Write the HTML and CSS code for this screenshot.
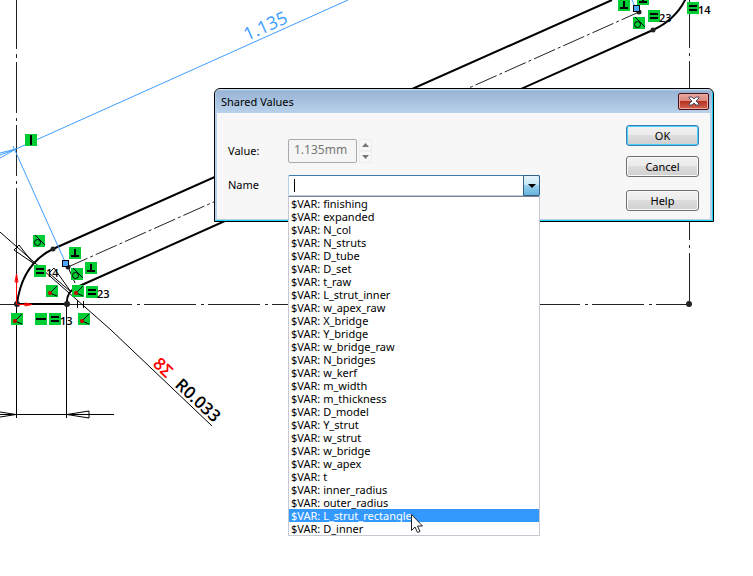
FILE: index.html
```html
<!DOCTYPE html>
<html lang="en">
<head>
<meta charset="utf-8">
<title>Shared Values</title>
<link rel="stylesheet" href="styles.css">
</head>
<body>
<main class="workspace">
<svg class="sketch" width="753" height="576" viewBox="0 0 753 576" aria-hidden="true">
  <defs>
    <g id="tile"><rect width="12" height="12" fill="#00cc33"/></g>
    <g id="equal"><use href="#tile"/><path d="M2 4H10M2 8H10" stroke="#000" stroke-width="2"/></g>
    <g id="perp"><use href="#tile"/><path d="M2 9H10M6 2V9" stroke="#000" stroke-width="2"/></g>
    <g id="vert"><use href="#tile"/><path d="M6 1V11" stroke="#000" stroke-width="2"/></g>
    <g id="horiz"><use href="#tile"/><path d="M1 6H11" stroke="#000" stroke-width="2"/></g>
    <g id="tangent"><use href="#tile"/><circle cx="4.500" cy="7.500" r="3" fill="none" stroke="#000"/><path d="M2 0L12 10" stroke="#000"/></g>
    <g id="coincident"><use href="#tile"/><path d="M11 1L4 8L11 11" fill="none" stroke="#000"/><circle cx="4" cy="8" r="2" fill="#c00"/></g>
  </defs>

  <g class="centerline">
    <path d="M16.5 0V49M16.5 54V58M16.5 62V113M16.5 118V121M16.5 125V176M16.5 181V184M16.5 188V304"/>
    <path d="M0 304.500H132M137 304.500H140M144 304.500H196M201 304.500H204M208 304.500H260M265 304.500H268M272 304.500H324M536 304.500H580M585 304.500H588M592 304.500H644M649 304.500H652M656 304.500H689"/>
    <path d="M689.500 0V48M689.500 53V56M689.500 61V112M689.500 200V240M689.500 245V248M689.500 253V304"/>
    <path d="M639 12L68 267" stroke-dasharray="23 3 3 3" stroke-dashoffset="4"/>
  </g>
  <g class="outline">
    <path d="M612 0L53 249Q22 264 17 304H67Q66 293 75 288L653 30Q677 19 687 -4"/>
  </g>
  <g class="dimension">
    <path d="M16.500 304V418M66.500 304V418M0 414.500H114M0 232L111 330L212 426"/>
    <path d="M0 412L16 414.500L0 417M67 414.500L89 411V418ZM33 263L14 250L19 245ZM71 292L49 273L54 268Z"/>
    <path d="M77.500 301V308M83.500 301V308M68 267L75 283"/>
  </g>
  <g class="driving">
    <path d="M0 153L16 149L348 0M0 158L16 149M0 155L16 149M13 146L66 264M632 0L636 9"/>
  </g>
  <g fill="#222">
    <circle cx="53" cy="249" r="2.500"/><circle cx="68" cy="267" r="2.500"/><circle cx="67" cy="304" r="3"/><circle cx="17" cy="304" r="3"/><circle cx="639" cy="12" r="2.500"/><circle cx="653" cy="30" r="2.500"/><circle cx="689" cy="304" r="3"/>
  </g>
  <g class="origin"><path d="M16.500 304V277M17 304.500H30"/><path d="M15 282L16.500 274L18 282ZM25 303L32 304.500L25 306Z"/></g>
  <g class="point"><rect x="62.500" y="260.500" width="6" height="6"/><rect x="633.500" y="5.500" width="6" height="6"/></g>

  <use href="#vert" x="25" y="134"/>
  <use href="#tangent" x="33" y="235"/>
  <use href="#perp" x="69" y="247"/>
  <use href="#perp" x="85" y="262"/>
  <use href="#tangent" x="71" y="268"/>
  <use href="#equal" x="34" y="265"/>
  <use href="#coincident" x="46" y="285"/>
  <use href="#coincident" x="72" y="285"/>
  <use href="#equal" x="86" y="286"/>
  <use href="#coincident" x="11" y="313"/>
  <use href="#horiz" x="35" y="313"/>
  <use href="#equal" x="49" y="313"/>
  <use href="#coincident" x="78" y="313"/>
  <use href="#perp" x="618" y="-1"/>
  <use href="#perp" x="637" y="-7"/>
  <use href="#tangent" x="633" y="17"/>
  <use href="#equal" x="648" y="10"/>
  <use href="#equal" x="687" y="2"/>
  <g class="tag">
    <text x="46" y="277">14</text><text x="97" y="298">23</text><text x="60" y="325">13</text><text x="659" y="22">23</text><text x="698" y="14">14</text>
  </g>
  <text class="length" transform="translate(247 41) rotate(-24)">1.135</text>
  <text class="radius" transform="translate(174 386) rotate(43)">R0.033</text>
  <text class="sigma" transform="translate(152 365) rotate(43)">8Σ</text>
</svg>

<section class="dialog" role="dialog" aria-labelledby="dialog-title">
  <header class="titlebar">
    <h1 id="dialog-title">Shared Values</h1>
    <button class="close" type="button" aria-label="Close"><svg width="12" height="10" viewBox="0 0 12 10"><path d="M1 1H4L6 3L8 1H11V2L8 5L11 8V9H8L6 7L4 9H1V8L4 5L1 2Z" fill="#fff" stroke="#4b4b60"/></svg></button>
  </header>
  <form class="content">
    <div class="fields">
      <div class="row">
        <label for="value">Value:</label>
        <input id="value" class="value" value="1.135mm" disabled>
        <div class="spinner">
          <button type="button" disabled aria-label="Increase"><svg width="7" height="4"><path d="M0 4L3.500 0L7 4Z"/></svg></button>
          <button type="button" disabled aria-label="Decrease"><svg width="7" height="4"><path d="M0 0L3.500 4L7 0Z"/></svg></button>
        </div>
      </div>
      <div class="row">
        <label for="name">Name</label>
        <div class="combo">
          <input id="name" class="name" role="combobox" aria-expanded="true" aria-controls="names">
          <span class="caret"></span>
          <button class="drop" type="button" aria-label="Show names"><svg width="8" height="4"><path d="M0 0H8L4 4Z"/></svg></button>
          <ul class="list" id="names" role="listbox">
            <li role="option">$VAR: finishing</li>
            <li role="option">$VAR: expanded</li>
            <li role="option">$VAR: N_col</li>
            <li role="option">$VAR: N_struts</li>
            <li role="option">$VAR: D_tube</li>
            <li role="option">$VAR: D_set</li>
            <li role="option">$VAR: t_raw</li>
            <li role="option">$VAR: L_strut_inner</li>
            <li role="option">$VAR: w_apex_raw</li>
            <li role="option">$VAR: X_bridge</li>
            <li role="option">$VAR: Y_bridge</li>
            <li role="option">$VAR: w_bridge_raw</li>
            <li role="option">$VAR: N_bridges</li>
            <li role="option">$VAR: w_kerf</li>
            <li role="option">$VAR: m_width</li>
            <li role="option">$VAR: m_thickness</li>
            <li role="option">$VAR: D_model</li>
            <li role="option">$VAR: Y_strut</li>
            <li role="option">$VAR: w_strut</li>
            <li role="option">$VAR: w_bridge</li>
            <li role="option">$VAR: w_apex</li>
            <li role="option">$VAR: t</li>
            <li role="option">$VAR: inner_radius</li>
            <li role="option">$VAR: outer_radius</li>
            <li role="option" class="selected" aria-selected="true">$VAR: L_strut_rectangle</li>
            <li role="option">$VAR: D_inner</li>
          </ul>
        </div>
      </div>
    </div>
    <div class="actions">
      <button class="button default" type="button">OK</button>
      <button class="button" type="button">Cancel</button>
      <button class="button help" type="button">Help</button>
    </div>
  </form>
</section>
<svg class="pointer" width="13" height="20" viewBox="0 0 13 20" aria-hidden="true"><path d="M.5 .5V16.500L4 13L6.500 18.500L9 17.500L6.500 12H11.500Z" fill="#fff" stroke="#222"/></svg>
</main>
</body>
</html>
```
FILE: styles.css
```css
* { box-sizing: border-box; }

body {
  margin: 0;
  background: #fff;
  font-family: "Noto Sans", "Open Sans", sans-serif;
  font-size: 11px;
  color: #000;
}

.workspace {
  position: relative;
  min-height: 100vh;
  overflow: hidden;
}

.sketch {
  position: absolute;
  left: 0;
  top: 0;
}

.sketch path { fill: none; }
.centerline { stroke: #222; }
.outline { stroke: #000; stroke-width: 2; }
.dimension { stroke: #000; }
.driving { stroke: #3d9dff; }
.origin { stroke: #f00; }
.point { fill: #4da6ff; stroke: #000; }

.tag {
  font: 600 11px "Open Sans", sans-serif;
}

.length,
.radius,
.sigma {
  font: 18px "Open Sans", sans-serif;
}

.length { fill: #3d9dff; }

.radius,
.sigma {
  font-size: 17px;
  font-weight: 600;
}

.sigma { fill: #f00; }

.dialog {
  position: absolute;
  left: 214px;
  top: 88px;
  width: 500px;
  padding: 0 2px 2px;
  border: 1px solid #000;
  border-radius: 6px 6px 0 0;
  background: #f7f7f7;
  box-shadow: inset -1px -1px #19d3f3, inset 2px 0 #b8d0ea, inset -3px -2px #b8d0ea;
}

.titlebar {
  display: flex;
  align-items: center;
  justify-content: space-between;
  height: 24px;
  margin: 0 -1px;
  padding: 0 3px 0 5px;
  border-radius: 5px 5px 0 0;
  background: linear-gradient(#d5e5f5 0, #98b4d5 2px, #b9d1ea);
}

h1 {
  margin: 0;
  font-size: 11px;
  font-weight: 400;
}

button {
  padding: 0;
  font: inherit;
}

.close {
  display: flex;
  align-items: center;
  justify-content: center;
  width: 31px;
  height: 17px;
  border: 1px solid #4a1018;
  border-radius: 2px;
  background: linear-gradient(#eba99f, #d9877b 48%, #b83222 50%, #cf6753);
  box-shadow: inset 0 0 0 1px #e9aaa2;
}

.content {
  display: flex;
  justify-content: space-between;
  height: 106px;
  padding: 12px 12px 0 11px;
}

.fields {
  display: grid;
  align-content: start;
  gap: 12px;
  padding-top: 14px;
}

.row {
  display: flex;
  align-items: center;
}

.row label {
  width: 60px;
  padding-bottom: 2px;
}

.value {
  width: 69px;
  height: 24px;
  padding: 0 5px 3px;
  border: 1px solid #aaa;
  border-radius: 2px;
  background: #f5f5f5;
  font: 12px "Noto Sans", sans-serif;
  color: #777;
}

.spinner {
  display: grid;
  width: 13px;
  height: 24px;
  margin-left: 2px;
}

.spinner button {
  display: grid;
  place-items: center;
  border: 1px solid #eee;
  background: #f7f7f7;
}

.spinner path { fill: #777; }

.combo {
  position: relative;
  display: flex;
  width: 252px;
  height: 21px;
  border: 1px solid #3d7bad;
  border-left-color: #b5cfe7;
  border-bottom-color: #b5cfe7;
  border-radius: 2px;
  background: #fff;
}

.name {
  flex: 1;
  min-width: 0;
  padding: 0 5px;
  border: 0;
  background: none;
  outline: 0;
}

.caret {
  position: absolute;
  left: 5px;
  top: 3px;
  width: 1px;
  height: 13px;
  background: #000;
}

.drop {
  display: grid;
  place-items: center;
  width: 17px;
  margin: -1px;
  border: 1px solid #2c628b;
  border-radius: 0 2px 2px 0;
  background: linear-gradient(#e5f4fc, #c4e5f6 48%, #98d1ef 50%, #68b3db);
}

.list {
  position: absolute;
  z-index: 1;
  left: -1px;
  right: -1px;
  top: 20px;
  margin: 0;
  padding: 0;
  border: 1px solid #c8c8d5;
  border-top-color: #80808c;
  background: #fff;
  list-style: none;
}

.list li {
  height: 13px;
  padding-left: 2px;
  line-height: 13px;
  white-space: nowrap;
}

.list .selected {
  background: #3399ff;
  color: #fff;
}

.actions {
  display: flex;
  flex-direction: column;
  gap: 10px;
}

.button {
  width: 73px;
  height: 21px;
  border: 1px solid #707070;
  border-radius: 3px;
  background: linear-gradient(#f2f2f2, #ebebeb 48%, #ddd 50%, #cfcfcf);
  box-shadow: inset 0 0 0 1px #fafafa;
}

.default {
  border-color: #3c7fb1;
  box-shadow: inset 0 0 0 1px #48d0f8;
}

.help { margin-top: 3px; }

.pointer {
  position: absolute;
  z-index: 2;
  left: 411px;
  top: 514px;
}
```
